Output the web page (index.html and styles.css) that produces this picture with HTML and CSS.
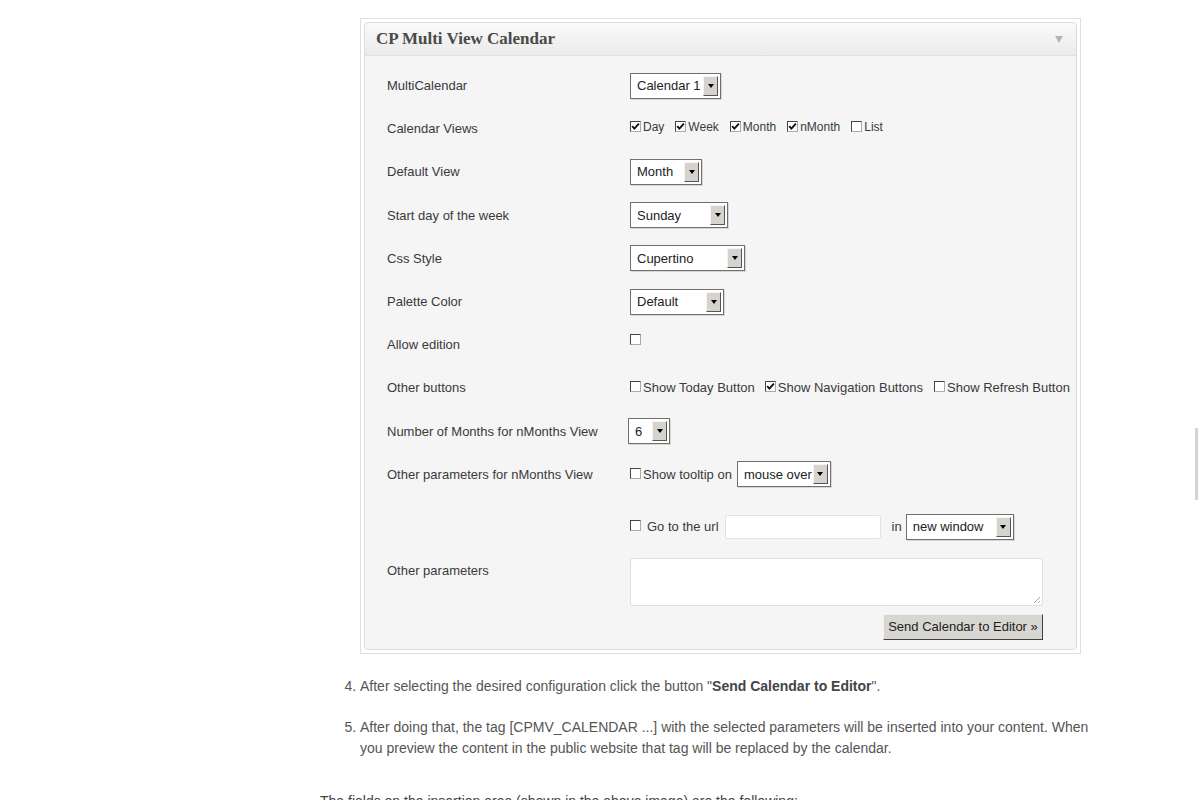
FILE: index.html
```html
<!DOCTYPE html>
<html lang="en">

<head>
    <meta charset="UTF-8">
    <title>CP Multi View Calendar</title>
    <link rel="stylesheet" href="styles.css">
</head>

<body>
    <div class="pagina">
        <div class="captura">
            <div class="marco">
                <div class="panel">
                    <div class="cabecera">
                        <h3>CP Multi View Calendar</h3>
                        <span class="flecha"></span>
                    </div>
                    <div class="form">
                        <div class="fila">
                            <span class="etiqueta">MultiCalendar</span>
                            <div class="valor">
                                <div class="sel w-cal"><span>Calendar 1</span><i class="boton"></i></div>
                            </div>
                        </div>
                        <div class="fila">
                            <span class="etiqueta">Calendar Views</span>
                            <div class="valor opciones vistas">
                                <label><b class="cb on"><svg viewBox="0 0 9 9"><path d="M1.2 4.2 L3.4 6.6 L7.9 1.6" /></svg></b>Day</label>
                                <label><b class="cb on"><svg viewBox="0 0 9 9"><path d="M1.2 4.2 L3.4 6.6 L7.9 1.6" /></svg></b>Week</label>
                                <label><b class="cb on"><svg viewBox="0 0 9 9"><path d="M1.2 4.2 L3.4 6.6 L7.9 1.6" /></svg></b>Month</label>
                                <label><b class="cb on"><svg viewBox="0 0 9 9"><path d="M1.2 4.2 L3.4 6.6 L7.9 1.6" /></svg></b>nMonth</label>
                                <label><b class="cb"></b>List</label>
                            </div>
                        </div>
                        <div class="fila">
                            <span class="etiqueta">Default View</span>
                            <div class="valor">
                                <div class="sel w-month"><span>Month</span><i class="boton"></i></div>
                            </div>
                        </div>
                        <div class="fila">
                            <span class="etiqueta">Start day of the week</span>
                            <div class="valor">
                                <div class="sel w-sunday"><span>Sunday</span><i class="boton"></i></div>
                            </div>
                        </div>
                        <div class="fila">
                            <span class="etiqueta">Css Style</span>
                            <div class="valor">
                                <div class="sel w-css"><span>Cupertino</span><i class="boton"></i></div>
                            </div>
                        </div>
                        <div class="fila">
                            <span class="etiqueta">Palette Color</span>
                            <div class="valor">
                                <div class="sel w-palette"><span>Default</span><i class="boton"></i></div>
                            </div>
                        </div>
                        <div class="fila">
                            <span class="etiqueta">Allow edition</span>
                            <div class="valor arriba">
                                <b class="cb"></b>
                            </div>
                        </div>
                        <div class="fila">
                            <span class="etiqueta">Other buttons</span>
                            <div class="valor opciones anchas">
                                <label><b class="cb"></b>Show Today Button</label>
                                <label><b class="cb on"><svg viewBox="0 0 9 9"><path d="M1.2 4.2 L3.4 6.6 L7.9 1.6" /></svg></b>Show Navigation Buttons</label>
                                <label><b class="cb"></b>Show Refresh Button</label>
                            </div>
                        </div>
                        <div class="fila">
                            <span class="etiqueta">Number of Months for nMonths View</span>
                            <div class="valor">
                                <div class="sel w-six"><span>6</span><i class="boton"></i></div>
                            </div>
                        </div>
                        <div class="fila">
                            <span class="etiqueta">Other parameters for nMonths View</span>
                            <div class="valor opciones">
                                <label><b class="cb"></b>Show tooltip on</label>
                                <div class="sel w-mouse"><span>mouse over</span><i class="boton"></i></div>
                            </div>
                        </div>
                        <div class="fila alta">
                            <span class="etiqueta"></span>
                            <div class="valor url">
                                <label><b class="cb"></b>Go to the url</label>
                                <div class="campo"></div>
                                <span class="en">in</span>
                                <div class="sel w-window"><span>new window</span><i class="boton"></i></div>
                            </div>
                        </div>
                        <div class="fila texto">
                            <span class="etiqueta">Other parameters</span>
                            <div class="valor">
                                <div class="area"><i class="agarre"></i></div>
                            </div>
                        </div>
                        <div class="acciones">
                            <div class="enviar">Send Calendar to Editor &raquo;</div>
                        </div>
                    </div>
                </div>
            </div>
        </div>

        <ol class="pasos" start="4">
            <li>After selecting the desired configuration click the button "<strong>Send Calendar to Editor</strong>".</li>
            <li>After doing that, the tag [CPMV_CALENDAR ...] with the selected parameters will be inserted into your content. When you preview the content in the public website that tag will be replaced by the calendar.</li>
        </ol>

        <p class="final">The fields on the insertion area (shown in the above image) are the following:</p>
    </div>
    <div class="barra"></div>
</body>

</html>
```

FILE: styles.css
```css
body {
    margin: 0;
    background-color: #fff;
    color: #555;
    font-family: "Liberation Sans", Arial, sans-serif;
    overflow: hidden;
}

.pagina {
    padding-left: 320px;
    padding-top: 18px;
}

.captura {
    margin-left: 40px;
}

.marco {
    width: 713px;
    padding: 3px;
    border: 1px solid #e0e0e0;
    background-color: #fff;
}

.panel {
    border: 1px solid #dcdcdc;
    border-radius: 4px;
    background-color: #f5f5f5;
}

.cabecera {
    height: 32px;
    display: flex;
    align-items: center;
    justify-content: space-between;
    padding: 0 13px 0 11px;
    border-bottom: 1px solid #dfdfdf;
    border-radius: 4px 4px 0 0;
    background: linear-gradient(#fafafa, #ebebeb);
}

.cabecera h3 {
    margin: 0;
    font-family: "Liberation Serif", Georgia, serif;
    font-size: 17px;
    font-weight: bold;
    color: #4a4a4a;
}

.flecha {
    width: 0;
    height: 0;
    border-left: 4px solid transparent;
    border-right: 4px solid transparent;
    border-top: 7px solid #b5b5b5;
}

.form {
    padding: 8px 33px 9px 22px;
    font-size: 13px;
    color: #3a3a3a;
}

.fila {
    display: grid;
    grid-template-columns: 243px minmax(0, 1fr);
    align-items: center;
    height: 43.2px;
}

.fila.alta {
    height: 62px;
}

.fila.texto {
    height: auto;
    align-items: start;
}

.fila.texto .etiqueta {
    padding-top: 5px;
}

.valor {
    display: flex;
    align-items: center;
    white-space: nowrap;
}

.valor.arriba {
    margin-top: -8px;
}

.opciones label,
.url label {
    display: flex;
    align-items: center;
    flex-shrink: 0;
    margin-right: 11px;
}

.opciones.vistas {
    font-size: 12px;
    margin-top: -3px;
}

.opciones.vistas label {
    margin-right: 11px;
}

.opciones.anchas label {
    margin-right: 10px;
}

.opciones.anchas label:nth-child(2) {
    margin-right: 11px;
}

.cb {
    display: inline-block;
    box-sizing: border-box;
    flex-shrink: 0;
    width: 11px;
    height: 11px;
    margin-right: 2px;
    margin-top: -2px;
    border: 1px solid;
    border-color: #444 #aaa #aaa #444;
    background-color: #fff;
}

.cb svg {
    display: block;
    width: 9px;
    height: 9px;
}

.cb svg path {
    fill: none;
    stroke: #111;
    stroke-width: 1.9;
}

.url label .cb {
    margin-right: 6px;
}

.url label {
    margin-right: 6px;
}

/* selects estilo windows clasico */
.sel {
    box-sizing: border-box;
    display: inline-flex;
    align-items: center;
    flex-shrink: 0;
    height: 26px;
    border: 1px solid #707070;
    background-color: #fff;
    box-shadow: 1px 1px 0 #d6d6d6;
}

.sel span {
    flex: 1;
    padding-left: 6px;
    color: #222;
    white-space: nowrap;
    overflow: hidden;
}

.boton {
    box-sizing: border-box;
    display: flex;
    align-items: center;
    justify-content: center;
    width: 15px;
    height: 20px;
    margin-right: 2px;
    border: 1px solid;
    border-color: #f4f4f4 #555 #555 #f4f4f4;
    background-color: #d6d3ce;
}

.boton::after {
    content: "";
    border-left: 3px solid transparent;
    border-right: 3px solid transparent;
    border-top: 4px solid #000;
}

.w-cal { width: 91px; }
.w-month { width: 72px; }
.w-sunday { width: 98px; }
.w-css { width: 115px; }
.w-palette { width: 94px; }
.w-six { width: 42px; margin-left: -2px; }
.w-mouse { width: 94px; margin-left: -6px; }
.w-window { width: 108px; }

.campo {
    flex-shrink: 0;
    width: 154px;
    height: 22px;
    border: 1px solid #e2e2e2;
    border-radius: 2px;
    background-color: #fff;
}

.en {
    margin: 0 4px 0 11px;
}

.area {
    position: relative;
    box-sizing: border-box;
    width: 413px;
    height: 48px;
    border: 1px solid #dedede;
    border-radius: 3px;
    background-color: #fff;
}

.agarre {
    position: absolute;
    right: 2px;
    bottom: 2px;
    width: 6px;
    height: 6px;
    background: linear-gradient(135deg, transparent 45%, #aaa 45%, #aaa 55%, transparent 55%, transparent 75%, #aaa 75%, #aaa 85%, transparent 85%);
}

.acciones {
    display: flex;
    justify-content: flex-end;
    margin-top: 8px;
}

.enviar {
    box-sizing: border-box;
    height: 26px;
    width: 160px;
    display: flex;
    align-items: center;
    justify-content: center;
    border: 1px solid;
    border-color: #f2f2f2 #404040 #404040 #f2f2f2;
    background-color: #d8d6d0;
    color: #222;
    font-size: 13px;
}

.pasos {
    margin: 22px 0 0 0;
    padding-left: 40px;
    width: 735px;
    font-size: 14px;
    line-height: 21px;
}

.pasos li {
    margin-bottom: 20px;
}

.pasos strong {
    color: #444;
}

.final {
    margin: 32px 0 0 0;
    font-size: 14px;
    line-height: 21px;
    color: #444;
}

.barra {
    position: fixed;
    right: 2px;
    top: 428px;
    width: 3px;
    height: 72px;
    background-color: #d4d4d4;
}
```
